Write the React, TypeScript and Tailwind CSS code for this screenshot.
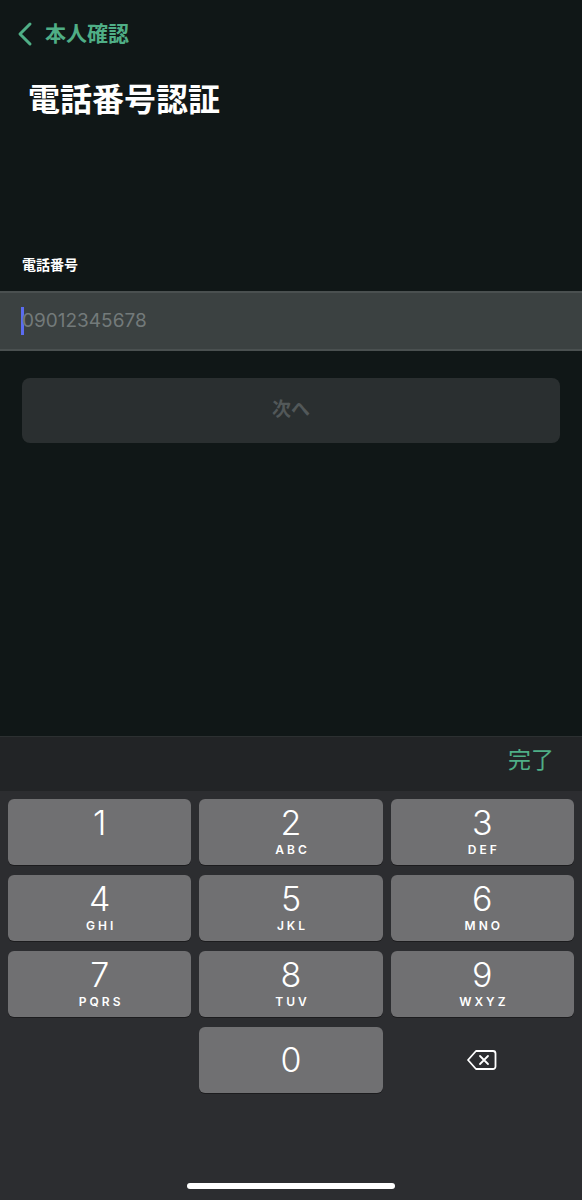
import React from "react";

const keys = [
  { d: "1", l: "" },
  { d: "2", l: "ABC" },
  { d: "3", l: "DEF" },
  { d: "4", l: "GHI" },
  { d: "5", l: "JKL" },
  { d: "6", l: "MNO" },
  { d: "7", l: "PQRS" },
  { d: "8", l: "TUV" },
  { d: "9", l: "WXYZ" },
];

function Key({ d, l }: { d: string; l: string }) {
  return (
    <div className="h-[66px] rounded-[6px] bg-[#707072] shadow-[0_1px_0_#1c1c1e] flex flex-col items-center justify-start pt-[6px]">
      <span className="text-[34px] leading-[36px] font-light text-white">{d}</span>
      {l && <span className="text-[12px] leading-[14px] font-semibold tracking-[3px] text-white pl-[3px] mt-[2px]">{l}</span>}
    </div>
  );
}

export default function App() {
  return (
    <div
      className="w-[582px] h-[1200px] bg-[#101717] flex flex-col overflow-hidden"
      style={{ fontFamily: 'Inter, "Noto Sans CJK JP", sans-serif' }}
    >
      {/* nav */}
      <div className="h-[68px] flex items-center pl-[16px] gap-[11px]">
        <svg width="18" height="26" viewBox="0 0 18 26" fill="none">
          <path d="M14 3 L4 13 L14 23" stroke="#4fae86" strokeWidth="3" strokeLinecap="round" strokeLinejoin="round" />
        </svg>
        <span className="text-[21px] font-bold text-[#4fae86]">本人確認</span>
      </div>
      <h1 className="pl-[28px] text-[32px] leading-[40px] font-bold text-white mt-[12px]">電話番号認証</h1>

      <div className="mt-[135px] pl-[22px] text-[14px] leading-[20px] font-bold text-white">電話番号</div>

      <div className="mt-[16px] h-[60px] bg-[#3b4141] border-y-2 border-[#4a5050] flex items-center pl-[21px]">
        <div className="w-[3px] h-[28px] bg-[#5b6cf0] mr-[-2px]" />
        <span className="text-[19px] text-[#737a7a]">09012345678</span>
      </div>

      <div className="mt-[27px] mx-[22px] h-[65px] rounded-[8px] bg-[#2a2f30] flex items-center justify-center">
        <span className="text-[19px] font-bold text-[#525859]">次へ</span>
      </div>

      <div className="flex-1" />

      {/* keyboard */}
      <div className="h-[464px] flex flex-col">
        <div className="h-[55px] bg-[#222426] border-t border-[#2c3031] flex items-center justify-end pr-[28px] pb-[8px]">
          <span className="text-[23px] text-[#4fae86]">完了</span>
        </div>
        <div className="flex-1 bg-[#2c2d30] px-[8px] pt-[8px] relative">
          <div className="grid grid-cols-3 gap-x-[8px] gap-y-[10px]">
            {keys.map((k) => (
              <Key key={k.d} d={k.d} l={k.l} />
            ))}
            <div />
            <div className="h-[66px] rounded-[6px] bg-[#707072] shadow-[0_1px_0_#1c1c1e] flex items-center justify-center">
              <span className="text-[34px] leading-[36px] font-light text-white">0</span>
            </div>
            <div className="h-[66px] flex items-center justify-center">
              <svg width="32" height="24" viewBox="0 0 32 24" fill="none">
                <path
                  d="M10 3 H27 a2.5 2.5 0 0 1 2.5 2.5 V18.5 a2.5 2.5 0 0 1 -2.5 2.5 H10 L2 12 Z"
                  stroke="white"
                  strokeWidth="1.8"
                  strokeLinejoin="round"
                />
                <path d="M14 8 L22 16 M22 8 L14 16" stroke="white" strokeWidth="1.8" strokeLinecap="round" />
              </svg>
            </div>
          </div>
          <div className="absolute bottom-[11px] left-[187px] w-[208px] h-[6px] rounded-full bg-white" />
        </div>
      </div>
    </div>
  );
}
